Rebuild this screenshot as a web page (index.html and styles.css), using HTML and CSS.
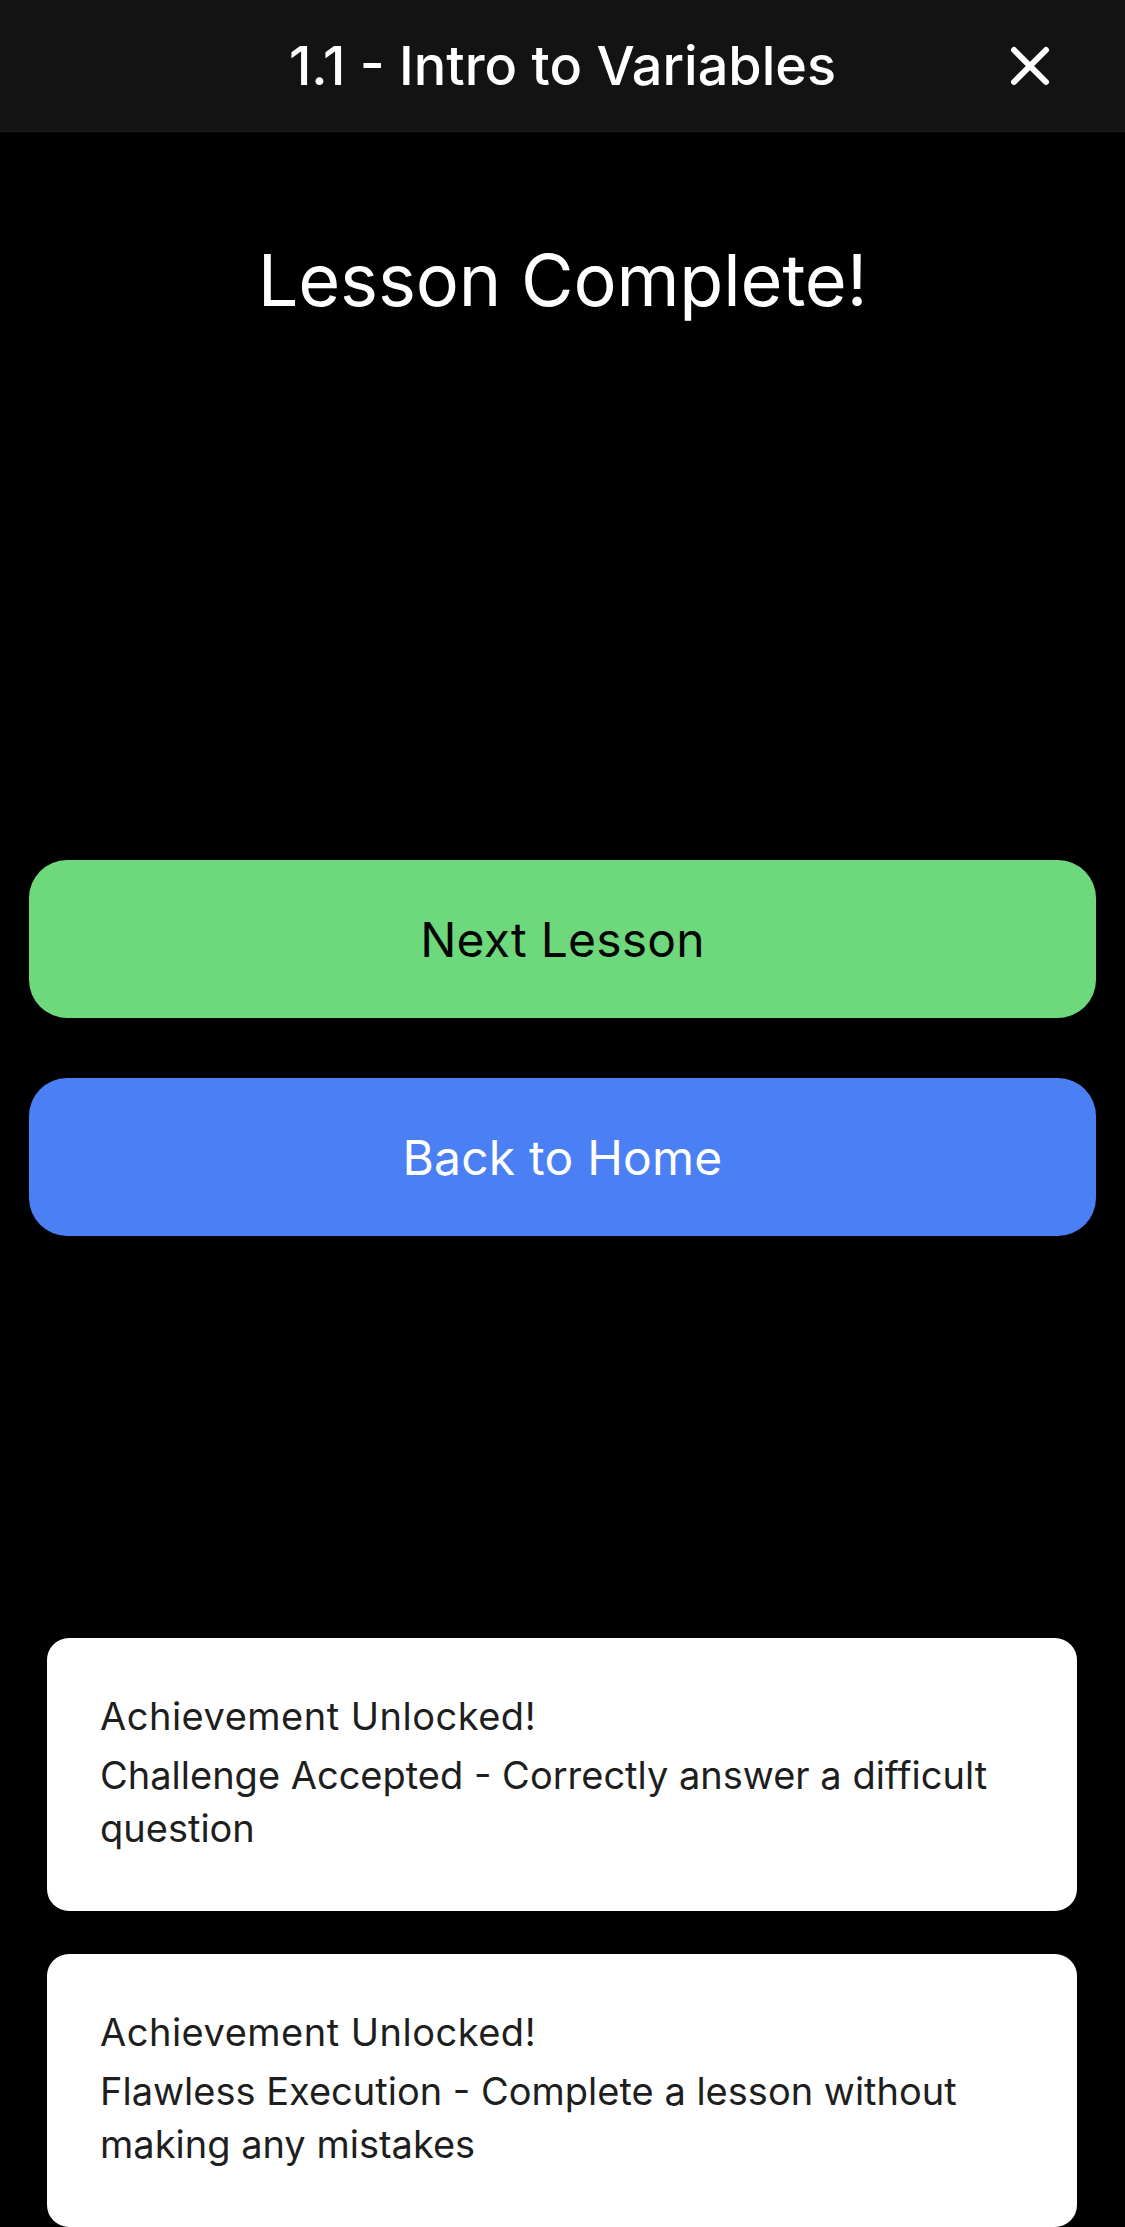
FILE: index.html
```html
<!DOCTYPE html>
<html lang="en">
<head>
<meta charset="utf-8">
<title>Lesson Complete</title>
<link rel="stylesheet" href="styles.css">
</head>
<body>
<div class="screen">
  <header class="topbar">
    <div class="topbar-side"></div>
    <h1 class="topbar-title">1.1 - Intro to Variables</h1>
    <div class="topbar-side topbar-right">
      <button class="close-btn" aria-label="Close">
        <svg viewBox="0 0 40 40" width="40" height="40">
          <path d="M4 4 L36 36 M36 4 L4 36" stroke="#ffffff" stroke-width="6" stroke-linecap="round" fill="none"/>
        </svg>
      </button>
    </div>
  </header>

  <h2 class="complete-title">Lesson Complete!</h2>

  <div class="actions">
    <button class="action action-next">Next Lesson</button>
    <button class="action action-home">Back to Home</button>
  </div>

  <div class="achievements">
    <div class="achievement">
      <div class="achievement-head">Achievement Unlocked!</div>
      <div class="achievement-body">Challenge Accepted - Correctly answer a difficult question</div>
    </div>
    <div class="achievement">
      <div class="achievement-head">Achievement Unlocked!</div>
      <div class="achievement-body">Flawless Execution - Complete a lesson without making any mistakes</div>
    </div>
  </div>
</div>
</body>
</html>
```

FILE: styles.css
```css
* {
  box-sizing: border-box;
}

html, body {
  margin: 0;
  padding: 0;
  background: #000000;
}

body {
  font-family: Inter, "Noto Sans", "Liberation Sans", sans-serif;
  color: #ffffff;
}

.screen {
  width: 1125px;
  min-height: 2227px;
  display: flex;
  flex-direction: column;
  overflow: hidden;
}

.topbar {
  height: 132px;
  background: #131313;
  border-bottom: 1px solid #1c1c1c;
  display: grid;
  grid-template-columns: 1fr auto 1fr;
  align-items: center;
}

.topbar-title {
  margin: 0;
  font-size: 54px;
  font-weight: 500;
  letter-spacing: 0;
  color: #ffffff;
  line-height: 1;
}

.topbar-right {
  display: flex;
  justify-content: flex-end;
  padding-right: 75px;
}

.close-btn {
  background: none;
  border: 0;
  padding: 0;
  width: 40px;
  height: 40px;
  display: block;
}

.close-btn svg {
  display: block;
}

.complete-title {
  margin: 104px 0 0;
  text-align: center;
  font-size: 72px;
  line-height: 88px;
  font-weight: 400;
  letter-spacing: -0.2px;
  color: #ffffff;
}

.actions {
  margin-top: 536px;
  padding: 0 29px;
  display: flex;
  flex-direction: column;
  gap: 60px;
}

.action {
  height: 158px;
  border: 0;
  border-radius: 38px;
  font-family: Inter, "Noto Sans", "Liberation Sans", sans-serif;
  font-size: 48px;
  font-weight: 400;
  letter-spacing: 0.2px;
  display: flex;
  align-items: center;
  justify-content: center;
  padding: 0;
}

.action-next {
  background: #6ed87c;
  color: #050505;
}

.action-home {
  background: #4b7ff4;
  color: #ffffff;
}

.achievements {
  margin-top: 402px;
  padding: 0 48px 0 47px;
  display: flex;
  flex-direction: column;
  gap: 43px;
}

.achievement {
  background: #ffffff;
  border-radius: 22px;
  padding: 52px 53px 56px;
  color: #1e1e1e;
  font-size: 38px;
  line-height: 53px;
}

.achievement-head {
  font-weight: 400;
  letter-spacing: 0.5px;
  margin-bottom: 6px;
}

.achievement-body {
  font-weight: 400;
}
```
